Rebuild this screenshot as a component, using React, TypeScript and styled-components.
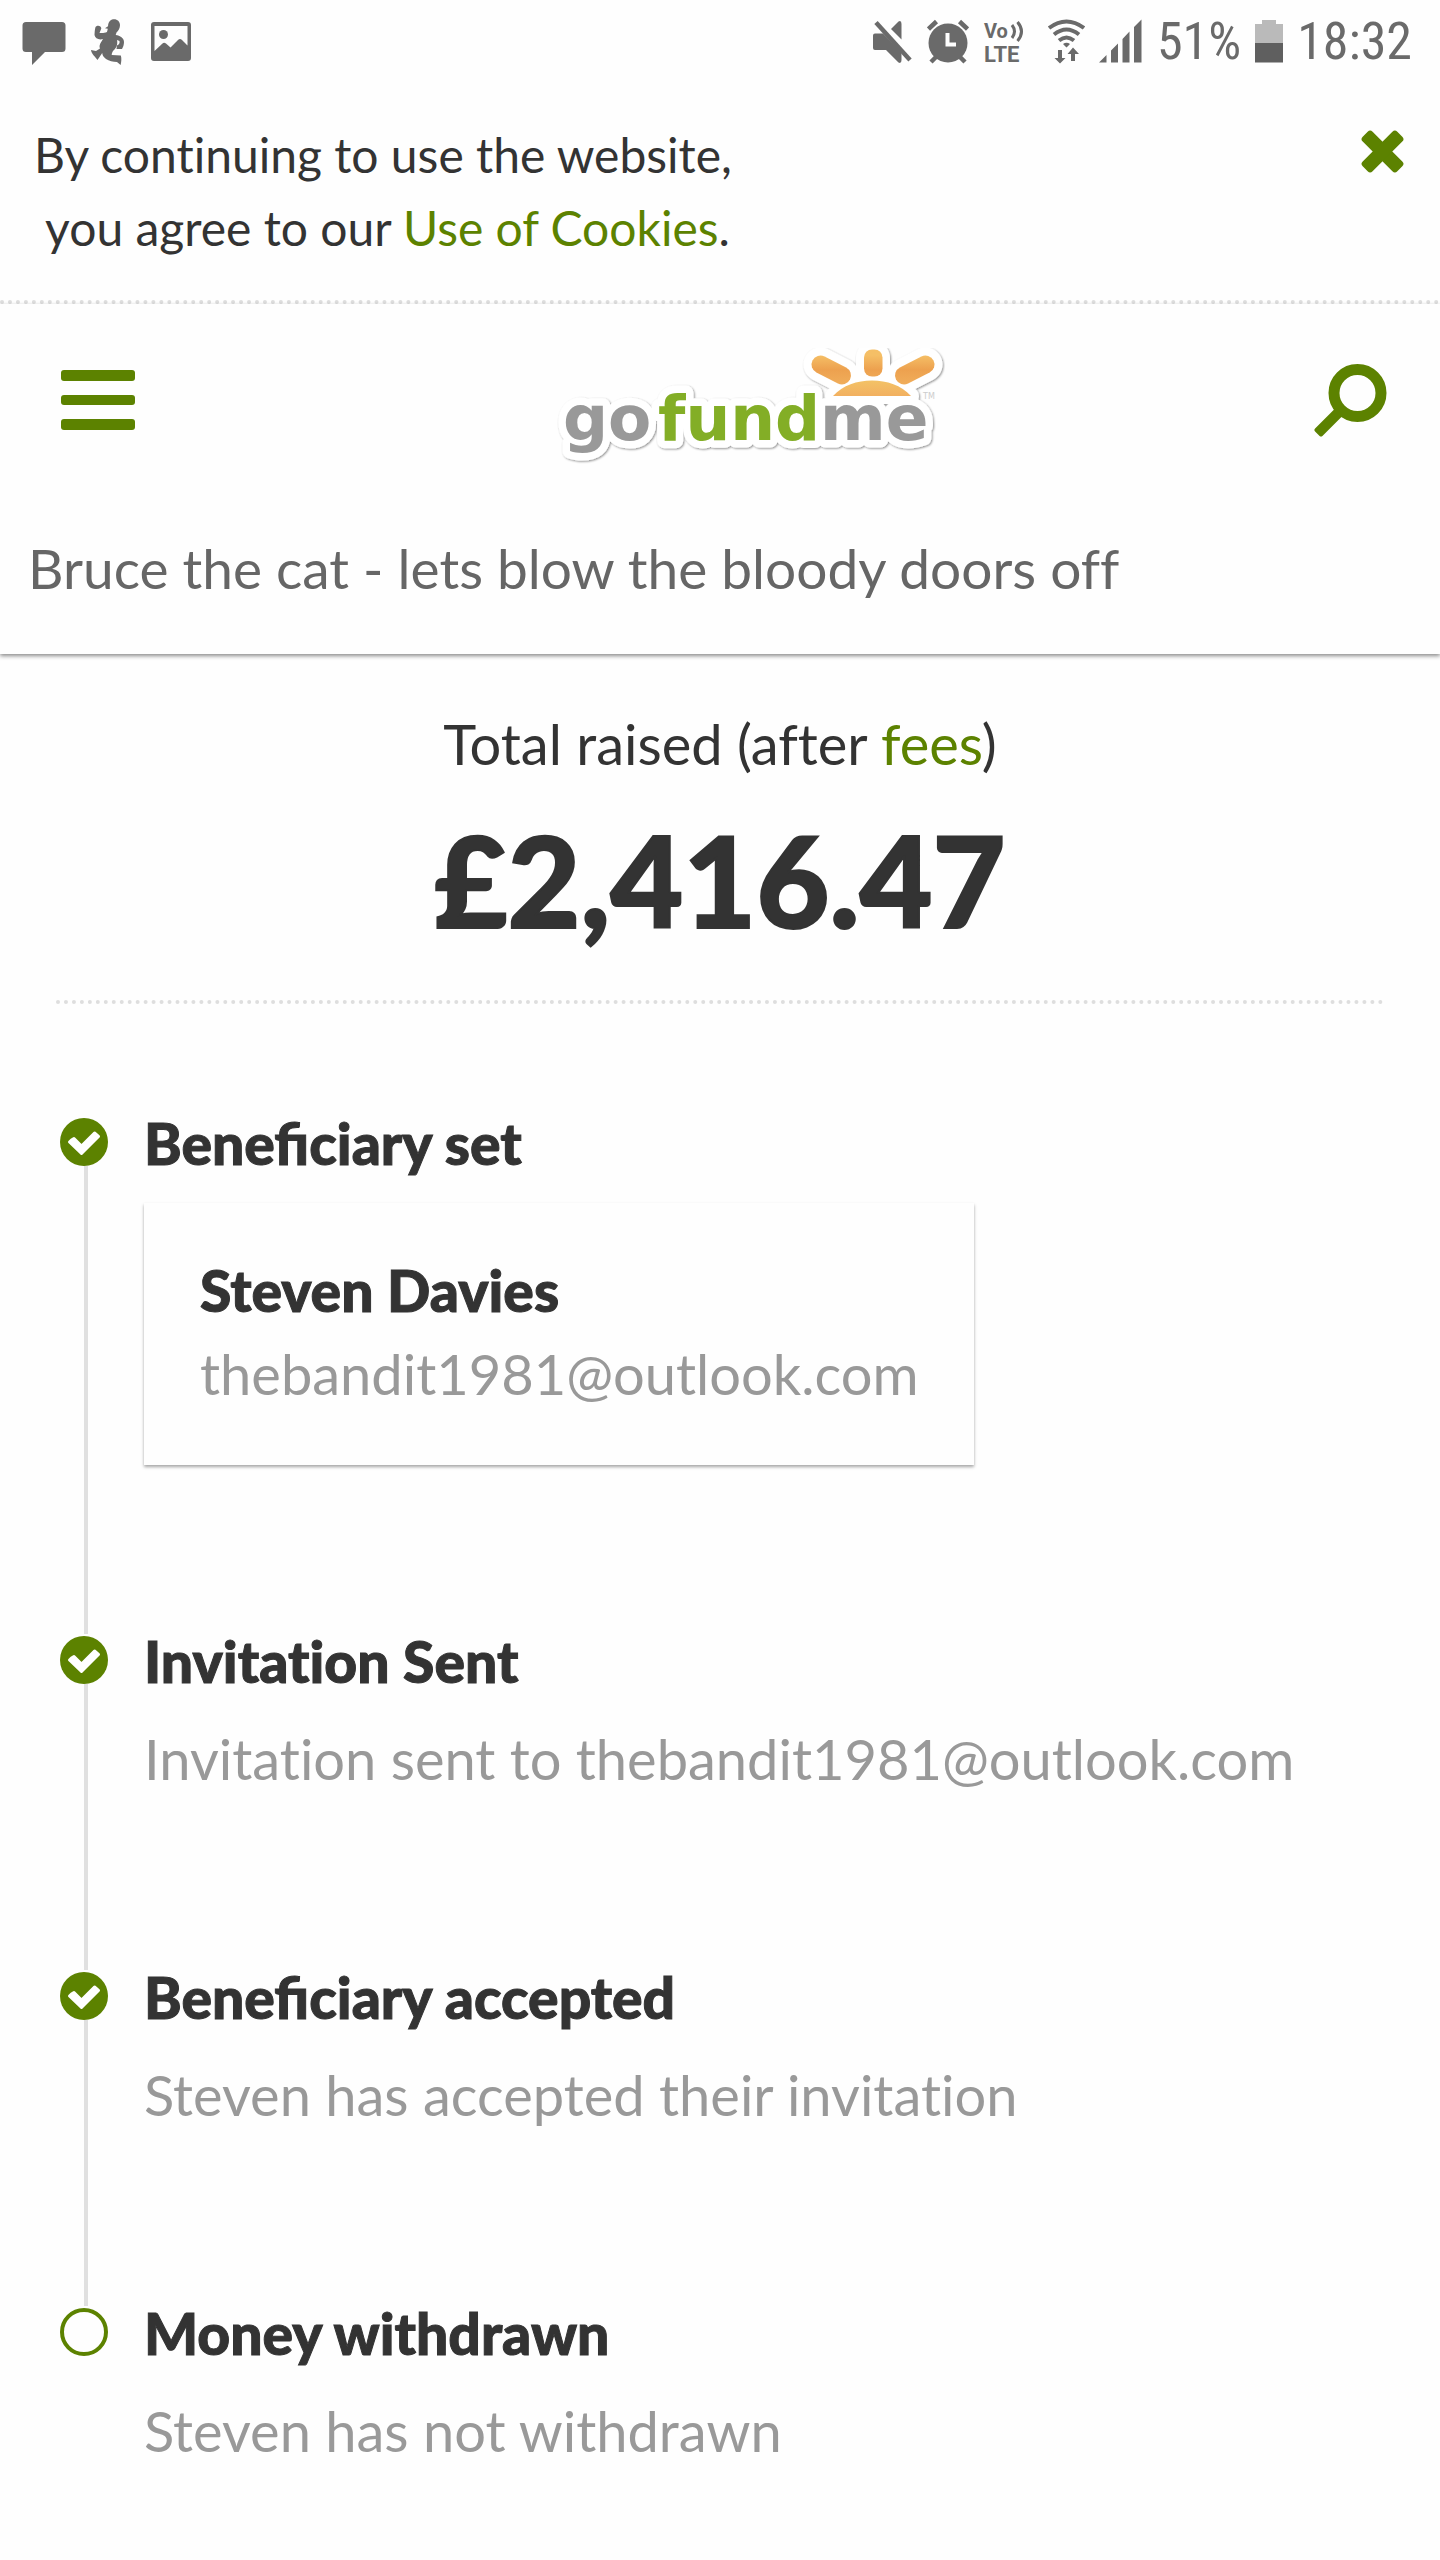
import React from 'react';
import styled, { createGlobalStyle } from 'styled-components';

const green = '#5c8200';
const ink = '#333333';
const statusGray = '#6a6a6a';

const GlobalStyle = createGlobalStyle`
  *, *::before, *::after { box-sizing: border-box; }
  body {
    margin: 0;
    background: #fefefe;
    color: ${ink};
    font-family: Lato, "Open Sans", sans-serif;
    font-size: 56px;
    font-variant-ligatures: none;
    line-height: 84px;
  }
  h1, h2, p, ol { margin: 0; padding: 0; }
`;

const StatusBar = styled.div`
  display: flex;
  justify-content: space-between;
  align-items: center;
  height: 84px;
  padding: 0 28px 0 22px;
  color: ${statusGray};
`;

const StatusGroup = styled.div<{ $gap: number }>`
  display: flex;
  align-items: center;
  gap: ${(p) => p.$gap}px;
  svg { display: block; flex: none; }
`;

const StatusText = styled.span`
  font-family: "Roboto Condensed", Roboto, sans-serif;
  font-size: 52px;
  line-height: 60px;
`;

const CookieNotice = styled.section`
  display: flex;
  justify-content: space-between;
  align-items: flex-start;
  padding: 34px 36px 36px 34px;
  border-bottom: 4px dotted #dedede;
`;

const CookieText = styled.p`
  font-size: 48px;
  line-height: 73px;
`;

const Link = styled.a`
  color: ${green};
  text-decoration: none;
`;

const IconButton = styled.button`
  display: block;
  padding: 0;
  border: 0;
  background: none;
  color: ${green};
  cursor: pointer;
  svg { display: block; }
`;

const CloseButton = styled(IconButton)`
  margin-top: 12px;
`;

const Header = styled.header`
  padding-bottom: 44px;
  box-shadow: 0 2px 4px rgba(0, 0, 0, 0.45);
`;

const Nav = styled.nav`
  display: flex;
  justify-content: space-between;
  align-items: center;
  padding: 16px 53px 16px 60px;
`;

const LogoLink = styled.a`
  display: block;
  svg { display: block; }
`;

const Title = styled.h1`
  padding: 30px 28px 0;
  color: #666;
  font-size: 55px;
  font-weight: 400;
`;

const Main = styled.main`
  padding: 48px 56px 40px;
`;

const Summary = styled.section`
  padding-bottom: 40px;
  border-bottom: 4px dotted #dedede;
  text-align: center;
`;

const Amount = styled.p`
  margin-top: 14px;
  font-size: 126px;
  font-weight: 900;
  line-height: 160px;
  -webkit-text-stroke: 2px currentColor;
`;

const Steps = styled.ol`
  padding: 103px 4px 0;
  list-style: none;
`;

const Step = styled.li`
  display: flex;
  gap: 36px;
`;

const Track = styled.div`
  display: flex;
  flex-direction: column;
  width: 48px;
  margin-top: 11px;
  margin-bottom: -9px;
  svg { display: block; flex: none; }
`;

const TrackLine = styled.div`
  flex: 1;
  width: 4px;
  margin-left: 24px;
  background: #e0e0e0;
`;

const StepBody = styled.div<{ $last: boolean }>`
  flex: 1;
  padding-bottom: ${(p) => (p.$last ? 0 : 160)}px;
`;

const StepTitle = styled.h2<{ $ligatures: boolean }>`
  font-size: 57px;
  font-weight: 900;
  font-variant-ligatures: ${(p) => (p.$ligatures ? 'normal' : 'none')};
  line-height: 72px;
  -webkit-text-stroke: 1px currentColor;
`;

const StepNote = styled.p`
  margin-top: 20px;
  color: #999;
`;

const Card = styled.div`
  width: fit-content;
  margin-top: 24px;
  padding: 45px 56px 49px;
  box-shadow: 0 2px 3px rgba(0, 0, 0, 0.35);
`;

const CardName = styled.p`
  font-size: 57px;
  font-weight: 900;
  -webkit-text-stroke: 1px currentColor;
`;

const CardEmail = styled.p`
  color: #999;
`;

function MessageIcon() {
  return (
    <svg width="44" height="48" viewBox="0 0 44 48" fill="currentColor" aria-hidden="true">
      <path d="M4 4h36a3.500 3.500 0 0 1 3.500 3.500v23a3.500 3.500 0 0 1-3.500 3.500H23L10 47V34H4a3.500 3.500 0 0 1-3.500-3.500v-23A3.500 3.500 0 0 1 4 4Z" />
    </svg>
  );
}

function RunnerIcon() {
  return (
    <svg width="36" height="48" viewBox="0 0 36 48" fill="currentColor" aria-hidden="true">
      <path d="M22 1.500C26 .2 30 2.500 30 7c0 3-1.500 5.500-3.500 7.500l-.8 2.500c4.500.5 8.300 3 8.300 7 0 3-1 5-2 7l-5.500 0 .5-3.500c2-.8 3-2.500 2.500-4.500l-2.500-1c.8 4-.2 8-4 11-1 2-1.500 3-1.200 4 3 .3 6 .2 9 .5 1 3 .5 6.500-.2 9.500l-3.600-3c-4-.2-8-.8-11-3-2.500-1.900-3.500-3.500-3.800-6L7.500 42C5 38.500 1.500 36 1 32l5 1 4-2.500c-1-2-.5-4 1.500-7L13 21c-4 1.200-8-.5-8.500-4 .2-3 .2-5 1-8 2-2.500 6-1 5.800 1.500L9.500 15c2.500 0 5 .3 7.500-1l.8-3.200-2.800-.6 3-2C18 5 19.500 2.500 22 1.500Z" />
    </svg>
  );
}

function PictureIcon() {
  return (
    <svg width="42" height="48" viewBox="0 0 42 48" fill="currentColor" aria-hidden="true">
      <path fillRule="evenodd" d="M4 4h34a3 3 0 0 1 3 3v33a3 3 0 0 1-3 3H4a3 3 0 0 1-3-3V7a3 3 0 0 1 3-3Zm.500 4v25l8-7.500q1.500-1.500 3.500 0l4.500 4L28 22q2-2 4 0l5.500 5.500V8Z" />
      <circle cx="13.500" cy="16.500" r="4.500" />
    </svg>
  );
}

function MuteIcon() {
  return (
    <svg width="40" height="48" viewBox="0 0 40 48" fill="currentColor" aria-hidden="true">
      <path d="M2 15.500H10L28.500 34v8q0 4-3 2.500L13 32H2q-2 0-2-2V17.500q0-2 2-2Z" />
      <path d="M28.500 6v15.500L18 11 25.500 3.500q3-1.500 3 2.500Z" />
      <path d="M4.500 1.500 41 38" stroke="#fefefe" strokeWidth="4" />
      <path d="M3 4.500 37 42" stroke="currentColor" strokeWidth="4.500" />
    </svg>
  );
}

function AlarmIcon() {
  return (
    <svg width="42" height="48" viewBox="0 0 42 48" aria-hidden="true">
      <circle cx="21" cy="25" r="19.500" fill="currentColor" />
      <path d="M1.500 11 9.500 3.500M32.500 3.500l8 7.500M4 44l5-5M38 44l-5-5" stroke="currentColor" strokeWidth="4.500" />
      <path d="M20.500 15v11.500H29" fill="none" stroke="#fefefe" strokeWidth="4" />
    </svg>
  );
}

function VolteIcon() {
  return (
    <svg width="44" height="48" viewBox="-1 -1 44 48" fill="currentColor" fontFamily="Roboto, sans-serif" fontWeight="700" role="img" aria-label="VoLTE">
      <text x="0" y="19" fontSize="20">Vo</text>
      <text x="0" y="43" fontSize="22">LTE</text>
      <path d="M28 6q5 6.500 0 13M33.500 3q8 9.500 0 19" fill="none" stroke="currentColor" strokeWidth="3" />
    </svg>
  );
}

function WifiIcon() {
  return (
    <svg width="44" height="48" viewBox="4 0 44 48" aria-hidden="true">
      <g fill="none" stroke="currentColor" strokeWidth="4">
        <path d="M12 10q17.500-13 35 0" />
        <path d="M17 16.500q12.500-10 25 0" />
        <path d="M22 22.500q7.500-6 15 0" />
      </g>
      <path d="M26 26q3.500-2.500 7 0L29.500 29.500ZM21 32h4v8h3.500L23 45.500 17.500 40H21ZM34 43v-7h-3.500L36 29.500l6 6.500h-4v7Z" fill="currentColor" />
    </svg>
  );
}

function SignalIcon() {
  return (
    <svg width="44" height="48" viewBox="0 0 44 48" fill="currentColor" aria-hidden="true">
      <path d="M0 44.500 7.500 37v7.500ZM12 32.500l7-7v19h-7ZM23.500 21l7-7.500v31h-7ZM35 9l7.500-7.500v43H35Z" />
    </svg>
  );
}

function BatteryIcon() {
  return (
    <svg width="28" height="48" viewBox="0 0 28 48" aria-hidden="true">
      <path d="M7 2h14v4h7v20H0V6h7Z" fill="#bababa" />
      <path d="M0 25h28v19.500H0Z" fill="#5f5f5f" />
    </svg>
  );
}

function CloseIcon() {
  return (
    <svg width="43" height="43" viewBox="0 0 43 43" fill="currentColor" aria-hidden="true">
      <rect x="-3" y="14.500" width="49" height="14" rx="3.500" transform="rotate(45 21.500 21.500)" />
      <rect x="-3" y="14.500" width="49" height="14" rx="3.500" transform="rotate(-45 21.500 21.500)" />
    </svg>
  );
}

function MenuIcon() {
  return (
    <svg width="75" height="60" viewBox="0 0 75 60" fill="currentColor" aria-hidden="true">
      <rect x="1" y="0" width="74" height="11" rx="3" />
      <rect x="1" y="25" width="74" height="10" rx="3" />
      <rect x="1" y="49" width="74" height="11" rx="3" />
    </svg>
  );
}

function SearchIcon() {
  return (
    <svg width="73" height="73" viewBox="0 0 73 73" fill="none" stroke="currentColor" aria-hidden="true">
      <circle cx="43.500" cy="29" r="23.500" strokeWidth="11" />
      <path d="M22 46.500 2.500 66 7 70.500 26.500 51Z" fill="currentColor" strokeWidth="4" strokeLinejoin="round" />
    </svg>
  );
}

function Logo() {
  return (
    <svg width="440" height="160" viewBox="-36 0 440 160" role="img" aria-label="gofundme">
      <defs>
        <linearGradient id="ray" gradientUnits="userSpaceOnUse" x1="0" y1="28" x2="0" y2="64">
          <stop offset="0.200" stopColor="#f5bf66" />
          <stop offset="0.600" stopColor="#eda14f" />
          <stop offset="1" stopColor="#f0ad5a" />
        </linearGradient>
        <linearGradient id="dome" x1="0" y1="0" x2="0" y2="1">
          <stop offset="0" stopColor="#f3c266" />
          <stop offset="1" stopColor="#f2b060" />
        </linearGradient>
        <filter id="edge" x="-10%" y="-10%" width="120%" height="130%">
          <feDropShadow dx="1" dy="1" stdDeviation="1" floodColor="#000" floodOpacity="0.450" />
        </filter>
      </defs>
      <g filter="url(#edge)" stroke="#fff" strokeLinejoin="round">
        <g fill="#fff" strokeLinecap="round">
          <path d="M292 76C302 65 316 60 331 60S360 65 370 76Z" strokeWidth="16" />
          <path d="M279.500 44.500 301 55.500M332 38v10M384.500 44.500 363 55.500" strokeWidth="34" />
        </g>
        <g fontFamily="'DejaVu Sans', sans-serif" fontWeight="700" fontSize="63" strokeWidth="15" paintOrder="stroke">
          <text x="22" y="120" fill="#999">go</text>
          <text x="279" y="120" fill="#999">me</text>
          <text x="117" y="120" fill="#83ae26">fund</text>
        </g>
      </g>
      <g stroke="url(#ray)" strokeWidth="18" strokeLinecap="round">
        <path d="M279.500 44.500 301 55.500" />
        <path d="M384.500 44.500 363 55.500" />
      </g>
      <rect x="323" y="29.500" width="18.500" height="27" rx="8" fill="url(#ray)" />
      <path d="M292 76C302 65 316 60.500 331 60.500S360 65 370 76Z" fill="url(#dome)" />
      <text x="382" y="79" fill="#ccc" fontFamily="'DejaVu Sans', sans-serif" fontSize="8">TM</text>
    </svg>
  );
}

function DoneIcon() {
  return (
    <svg width="48" height="48" viewBox="0 0 48 48" role="img" aria-label="Done">
      <circle cx="24" cy="24" r="24" fill={green} />
      <path d="M11.500 22 14 20.500 21.500 28 34.500 15 38.500 18.500 21.500 35.500 9.500 24Z" fill="#fff" stroke="#fff" strokeWidth="3" strokeLinejoin="round" />
    </svg>
  );
}

function PendingIcon() {
  return (
    <svg width="48" height="48" viewBox="0 0 48 48" role="img" aria-label="Pending">
      <circle cx="24" cy="24" r="22" fill="none" stroke={green} strokeWidth="4" />
    </svg>
  );
}

type StepData = {
  title: string;
  done: boolean;
  note?: string;
  person?: { name: string; email: string };
};

const steps: StepData[] = [
  {
    title: 'Beneficiary set',
    done: true,
    person: { name: 'Steven Davies', email: 'thebandit1981@outlook.com' },
  },
  { title: 'Invitation Sent', done: true, note: 'Invitation sent to thebandit1981@outlook.com' },
  { title: 'Beneficiary accepted', done: true, note: 'Steven has accepted their invitation' },
  { title: 'Money withdrawn', done: false, note: 'Steven has not withdrawn' },
];

export default function App() {
  return (
    <>
      <GlobalStyle />
      <StatusBar>
        <StatusGroup $gap={24}>
          <MessageIcon />
          <RunnerIcon />
          <PictureIcon />
        </StatusGroup>
        <StatusGroup $gap={14}>
          <MuteIcon />
          <AlarmIcon />
          <VolteIcon />
          <WifiIcon />
          <SignalIcon />
          <StatusText>51%</StatusText>
          <BatteryIcon />
          <StatusText>18:32</StatusText>
        </StatusGroup>
      </StatusBar>
      <CookieNotice>
        <CookieText>
          By continuing to use the website,
          <br />
          &nbsp;you agree to our <Link href="#cookies">Use of Cookies</Link>.
        </CookieText>
        <CloseButton type="button" aria-label="Close">
          <CloseIcon />
        </CloseButton>
      </CookieNotice>
      <Header>
        <Nav>
          <IconButton type="button" aria-label="Menu">
            <MenuIcon />
          </IconButton>
          <LogoLink href="#home">
            <Logo />
          </LogoLink>
          <IconButton type="button" aria-label="Search">
            <SearchIcon />
          </IconButton>
        </Nav>
        <Title>Bruce the cat - lets blow the bloody doors off</Title>
      </Header>
      <Main>
        <Summary>
          <p>
            Total raised (after <Link href="#fees">fees</Link>)
          </p>
          <Amount>£2,416.47</Amount>
        </Summary>
        <Steps>
          {steps.map((step, i) => {
            const last = i === steps.length - 1;
            return (
              <Step key={step.title}>
                <Track>
                  {step.done ? <DoneIcon /> : <PendingIcon />}
                  {!last && <TrackLine />}
                </Track>
                <StepBody $last={last}>
                  <StepTitle $ligatures={step.title.includes('fi')}>{step.title}</StepTitle>
                  {step.person && (
                    <Card>
                      <CardName>{step.person.name}</CardName>
                      <CardEmail>{step.person.email}</CardEmail>
                    </Card>
                  )}
                  {step.note && <StepNote>{step.note}</StepNote>}
                </StepBody>
              </Step>
            );
          })}
        </Steps>
      </Main>
    </>
  );
}
